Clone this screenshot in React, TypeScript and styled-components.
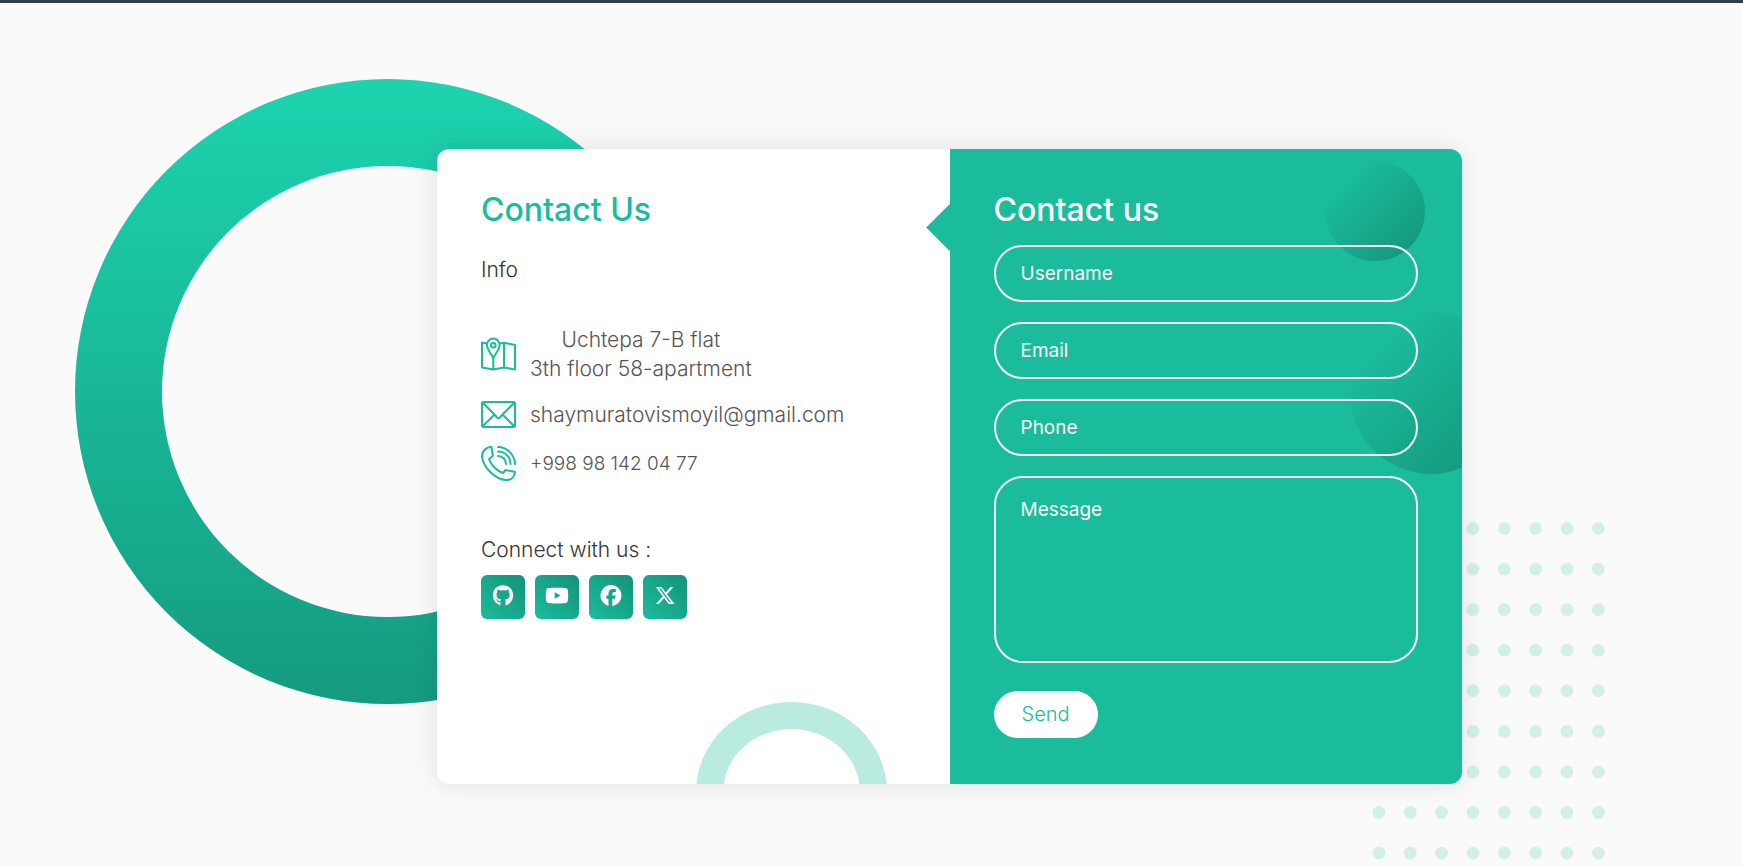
import React from 'react';
import styled, { createGlobalStyle } from 'styled-components';
import { FaFacebook, FaGithub, FaXTwitter, FaYoutube } from 'react-icons/fa6';

const green = '#1abc9c';
const deepGreen = '#149279';
const paper = '#fafafa';
const fonts = 'Inter, "Open Sans", sans-serif';

const GlobalStyle = createGlobalStyle`
  * { box-sizing: border-box; }
  body {
    margin: 0;
    background: ${paper};
    font-family: ${fonts};
  }
`;

const Page = styled.main`
  min-height: 100vh;
  overflow: hidden;
  border-top: 3px solid #2f3e46;
  padding: 146px 32px 82px 188px;
  background: ${paper};
`;

const Stage = styled.div`
  position: relative;
  width: 100%;
  max-width: 1025px;
  margin: 0 auto;
`;

const BigRing = styled.div`
  position: absolute;
  top: -70px;
  left: -362px;
  width: 625px;
  height: 625px;
  padding: 87px;
  border-radius: 50%;
  background: linear-gradient(to bottom, #1cd4af, #159b80);

  &::after {
    content: "";
    display: block;
    height: 100%;
    border-radius: 50%;
    background: ${paper};
  }
`;

const DotGrid = styled.svg`
  position: absolute;
  top: 373px;
  right: -143px;
  fill: ${green};
  opacity: 0.17;
`;

const Card = styled.div`
  position: relative;
  display: grid;
  grid-template-columns: 1fr 1fr;
  border-radius: 12px;
  overflow: hidden;
  background: #fff;
  box-shadow: 0 0 25px 1px rgba(0, 0, 0, 0.1);
`;

const InfoPanel = styled.section`
  position: relative;
  overflow: hidden;
  padding: 46px 44px;
`;

const Arch = styled.div`
  position: absolute;
  right: 63px;
  bottom: -98px;
  width: 191px;
  height: 180px;
  border: 27px solid ${green};
  border-radius: 50%;
  opacity: 0.3;
`;

const Title = styled.h2<{ $color: string }>`
  margin: 0;
  font-size: 32px;
  font-weight: 500;
  line-height: 30px;
  color: ${(p) => p.$color};
`;

const Lead = styled.p`
  margin: 0;
  font-size: 21px;
  font-weight: 300;
  line-height: 30px;
  color: #333;
`;

const Intro = styled(Lead)`
  margin-top: 30px;
`;

const Details = styled.address`
  display: flex;
  flex-direction: column;
  gap: 14px;
  margin: 40px 0 54px;
  font-style: normal;
`;

const Detail = styled.div<{ $numeric?: boolean }>`
  display: flex;
  align-items: center;
  gap: 14px;
  min-height: 35px;
  font-size: ${(p) => (p.$numeric ? 19 : 21)}px;
  font-weight: 300;
  line-height: 29px;
  color: #555;
  text-align: center;
`;

const DetailIcon = styled.svg`
  flex: none;
  width: 35px;
  height: 35px;
  fill: none;
  stroke: ${green};
  stroke-width: 2;
  stroke-linejoin: round;
  stroke-linecap: round;
`;

const SocialLinks = styled.div`
  display: flex;
  gap: 10px;
  margin-top: 10px;
`;

const SocialLink = styled.a`
  display: flex;
  align-items: center;
  justify-content: center;
  width: 44px;
  height: 44px;
  padding-bottom: 3px;
  border-radius: 6px;
  color: #fff;
  background: linear-gradient(45deg, ${green}, ${deepGreen});

  svg {
    flex: none;
    width: 24px;
    height: 21px;
  }
`;

const FormPanel = styled.section`
  position: relative;
  background: ${green};

  &::before {
    content: "";
    position: absolute;
    top: 62px;
    left: -17px;
    width: 33px;
    height: 33px;
    background: ${green};
    transform: rotate(45deg);
  }
`;

const Bubble = styled.div<{ $size: number; $top: number; $right: number }>`
  position: absolute;
  top: ${(p) => p.$top}px;
  right: ${(p) => p.$right}px;
  width: ${(p) => p.$size}px;
  height: ${(p) => p.$size}px;
  border-radius: 50%;
  background: linear-gradient(135deg, transparent 20%, ${deepGreen});
`;

const Form = styled.form`
  position: relative;
  display: flex;
  flex-direction: column;
  align-items: flex-start;
  gap: 20px;
  padding: 46px 44px;
`;

const Field = styled.input`
  display: block;
  width: 100%;
  height: 57px;
  padding: 0 25px;
  border: 2px solid ${paper};
  border-radius: 29px;
  outline: none;
  background: none;
  font: 400 19px/27px ${fonts};
  color: #fff;

  &::placeholder { color: ${paper}; opacity: 1; }
`;

const MessageField = styled(Field)`
  height: 187px;
  padding: 18px 25px;
  resize: none;
  overflow: auto;
`;

const SendButton = styled.button`
  margin-top: 8px;
  height: 47px;
  padding: 0 28px;
  border: 0;
  border-radius: 24px;
  background: #fff;
  font: 300 20px/29px ${fonts};
  color: ${green};
`;

const columns = [0, 1, 2, 3, 4, 5, 6, 7];
const rows = [0, 1, 2, 3, 4, 5, 6, 7, 8, 9, 10, 11];

export default function App() {
  return (
    <>
      <GlobalStyle />
      <Page>
        <Stage>
          <BigRing />
          <DotGrid width="233" height="460" aria-hidden="true">
            {rows.map((r) =>
              columns.map((c) => (
                <circle key={`${r}-${c}`} cx={6.9 + c * 31.35} cy={6.5 + r * 40.57} r="6.4" />
              )),
            )}
          </DotGrid>
          <Card>
            <InfoPanel>
              <Arch />
              <Title $color={green}>Contact Us</Title>
              <Intro>Info</Intro>
              <Details>
                <Detail>
                  <DetailIcon viewBox="0 0 35 35" aria-hidden="true">
                    <path d="M6.2 6.500 L1 5.500 V30.500 L12.3 32.500 L23 30.500 L34 32.500 V8 L23 5.800 L18.500 6.500 M12.300 21 V32.500 M23 5.800 V30.500" />
                    <path d="M12.300 21 C10.500 17 6 13 6 7.800 a6.300 6.300 0 0 1 12.600 0 C18.600 13 14 17 12.300 21 Z" />
                    <circle cx="12.300" cy="8.200" r="2.300" />
                  </DetailIcon>
                  <span>Uchtepa 7-B flat<br />3th floor 58-apartment</span>
                </Detail>
                <Detail>
                  <DetailIcon viewBox="0 0 35 35" aria-hidden="true">
                    <rect x="1" y="5" width="33" height="25" rx="2" />
                    <path d="M1.5 5.5 L13.5 17.5 L16 20.5 Q17.5 22 19 20.5 L21.5 17.5 L33.5 5.5 M1.5 29.5 L13.5 17.5 M33.5 29.5 L21.5 17.5" />
                  </DetailIcon>
                  <span>shaymuratovismoyil@gmail.com</span>
                </Detail>
                <Detail $numeric>
                  <DetailIcon viewBox="0 0 35 35" aria-hidden="true">
                    <path d="M10.5 1 C5 1 1 5 1 10.5 C2 21 14 33.5 25 34 C30 34 33.5 31 34 26 L24.5 24 L22 27 C16 25 10 19 8 13 L11.8 10 Z" />
                    <path d="M17 1 C26 1 34 9 34 18 M17 5.5 C24 5.5 29.5 11 29.5 18 M17 10 C21.5 10 25 13.5 25 18" />
                  </DetailIcon>
                  <span>+998 98 142 04 77</span>
                </Detail>
              </Details>
              <Lead>Connect with us :</Lead>
              <SocialLinks>
                <SocialLink href="#" aria-label="GitHub"><FaGithub /></SocialLink>
                <SocialLink href="#" aria-label="YouTube"><FaYoutube /></SocialLink>
                <SocialLink href="#" aria-label="Facebook"><FaFacebook /></SocialLink>
                <SocialLink href="#" aria-label="X"><FaXTwitter /></SocialLink>
              </SocialLinks>
            </InfoPanel>
            <FormPanel>
              <Bubble $size={162} $top={163} $right={-50} />
              <Bubble $size={100} $top={12} $right={37} />
              <Form>
                <Title $color="#fff">Contact us</Title>
                <Field type="text" placeholder="Username" aria-label="Username" />
                <Field type="email" placeholder="Email" aria-label="Email" />
                <Field type="tel" placeholder="Phone" aria-label="Phone" />
                <MessageField as="textarea" placeholder="Message" aria-label="Message" />
                <SendButton type="submit">Send</SendButton>
              </Form>
            </FormPanel>
          </Card>
        </Stage>
      </Page>
    </>
  );
}
